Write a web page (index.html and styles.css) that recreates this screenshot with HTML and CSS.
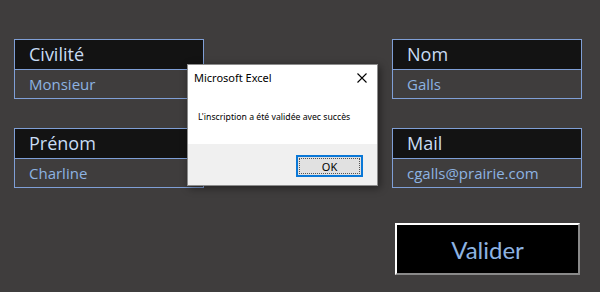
FILE: index.html
```html
<!DOCTYPE html>
<html lang="fr">
<head>
  <meta charset="UTF-8">
  <title>Inscription</title>
  <link rel="stylesheet" href="styles.css">
</head>
<body>
  <div class="sheet">
    <div class="fields">
      <div class="field">
        <div class="field-label">Civilité</div>
        <div class="field-value">Monsieur</div>
      </div>
      <div class="field">
        <div class="field-label">Nom</div>
        <div class="field-value">Galls</div>
      </div>
      <div class="field">
        <div class="field-label">Prénom</div>
        <div class="field-value">Charline</div>
      </div>
      <div class="field">
        <div class="field-label">Mail</div>
        <div class="field-value">cgalls@prairie.com</div>
      </div>
      <button class="submit">Valider</button>
    </div>

    <div class="msgbox">
      <div class="msgbox-title">
        <span>Microsoft Excel</span>
        <svg class="msgbox-close" width="10" height="10" viewBox="0 0 10 10">
          <path d="M0.5 0.5 L9.5 9.5 M9.5 0.5 L0.5 9.5" stroke="#000" stroke-width="1.1" fill="none"/>
        </svg>
      </div>
      <div class="msgbox-text">L'inscription a été validée avec succès</div>
      <div class="msgbox-footer">
        <button class="msgbox-ok"><span>OK</span></button>
      </div>
    </div>
  </div>
</body>
</html>
```

FILE: styles.css
```css
* { box-sizing: border-box; }
body { margin: 0; background: #3f3d3d; font-family: "Open Sans", "Noto Sans", sans-serif; }
.sheet { position: relative; width: 600px; height: 292px; padding: 39px 18px 0 14px; }

.fields { display: grid; grid-template-columns: 190px 190px; justify-content: space-between; row-gap: 29px; }
.field { border: 1px solid #7f9fd6; }
.field-label { height: 30px; background: #131313; color: #c9dcf4; font-size: 18px; line-height: 29px; padding-left: 14px; border-bottom: 1px solid #7f9fd6; }
.field-value { height: 28px; color: #8db3e2; font-size: 15px; line-height: 28px; padding-left: 14px; }

.submit { grid-column: 2; width: 185px; height: 52px; margin: 6px 0 0 3px; background: #000; color: #8db3e2;
  font-family: Lato, "Noto Sans", sans-serif; font-size: 24px; border: 2px solid #fff; border-right-color: #8a8a8a; border-bottom-color: #8a8a8a; }

.msgbox { position: absolute; left: 187px; top: 64px; width: 191px; height: 122px; background: #fff; border: 1px solid #8c8c8c;
  box-shadow: 2px 2px 8px rgba(0,0,0,0.45); font-family: "Noto Sans", "Open Sans", sans-serif; color: #000; display: flex; flex-direction: column; }
.msgbox-title { display: flex; justify-content: space-between; align-items: center; height: 24px; padding: 1px 10px 0 6px; font-size: 11px; }
.msgbox-text { flex: 1; padding: 22px 0 0 10px; font-size: 8.7px; }
.msgbox-footer { height: 41px; background: #f0f0f0; display: flex; justify-content: flex-end; align-items: center; padding-right: 14px; }
.msgbox-ok { width: 67px; height: 22px; margin-top: 2px; background: #e1e1e1; border: 2px solid #0a78d7; padding: 1px; font-family: "Noto Sans", sans-serif; font-size: 11px; }
.msgbox-ok span { display: block; height: 100%; border: 1px dotted #555; line-height: 15px; }
```
